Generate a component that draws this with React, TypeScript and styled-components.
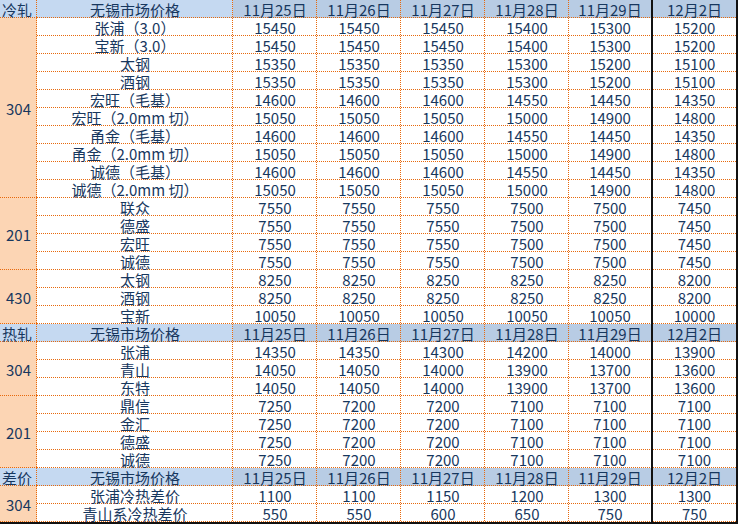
import React from "react";
import styled, { createGlobalStyle, css } from "styled-components";

const Global = createGlobalStyle`
  html, body { margin: 0; padding: 0; background: #ffffff; }
  body { font-family: "Noto Sans CJK SC", "Liberation Sans", sans-serif; }
`;

const ORANGE = "#e8690c";
const INK = "#17375e";

const Sheet = styled.div`
  display: grid;
  grid-template-columns: 37px 196px 84px 84px 84px 84px 84px 83px;
  grid-auto-rows: 18px;
  width: 738px;
  border-right: 2px solid #111;
  border-bottom: 2px solid #111;
  box-sizing: border-box;
  color: ${INK};
  font-size: 15px;
`;

type Tone = "head" | "headDate" | "cat" | "plain";

const fills: Record<Tone, string> = {
  head: "#c5d9f1",
  headDate: "#b8cce4",
  cat: "#fcd5b4",
  plain: "#ffffff",
};

const dotH = `repeating-linear-gradient(to right, ${ORANGE} 0 1px, transparent 1px 2px)`;
const dotV = `repeating-linear-gradient(to bottom, ${ORANGE} 0 1px, transparent 1px 2px)`;

const Cell = styled.div<{ $tone: Tone; $span?: number; $thick?: boolean; $left?: boolean; $last?: boolean }>`
  box-sizing: border-box;
  display: flex;
  align-items: center;
  justify-content: ${(p) => (p.$left ? "flex-start" : "center")};
  padding-left: ${(p) => (p.$left ? "2px" : "0")};
  padding-top: 1px;
  white-space: pre;
  line-height: 16px;
  background-color: ${(p) => fills[p.$tone]};
  background-repeat: no-repeat;
  ${(p) =>
    p.$thick || p.$last
      ? css`
          background-image: ${dotH};
          background-size: 100% 1px;
          background-position: left bottom;
        `
      : css`
          background-image: ${dotH}, ${dotV};
          background-size: 100% 1px, 1px 100%;
          background-position: left bottom, right top;
        `}
  ${(p) => p.$thick && css`border-right: 2px solid #111;`}
  ${(p) => p.$span && css`grid-row: span ${p.$span};`}
`;

const DATES = ["11月25日", "11月26日", "11月27日", "11月28日", "11月29日", "12月2日"];

type Row = [string, ...number[]];
type Group = { grade: string; rows: Row[] };
type Section = { title: string; groups: Group[] };

const r = (name: string, ...v: number[]): Row => [name, ...v];

const SECTIONS: Section[] = [
  {
    title: "冷轧",
    groups: [
      {
        grade: "304",
        rows: [
          r("张浦（3.0）", 15450, 15450, 15450, 15400, 15300, 15200),
          r("宝新（3.0）", 15450, 15450, 15450, 15400, 15300, 15200),
          r("太钢", 15350, 15350, 15350, 15300, 15200, 15100),
          r("酒钢", 15350, 15350, 15350, 15300, 15200, 15100),
          r("宏旺（毛基）", 14600, 14600, 14600, 14550, 14450, 14350),
          r("宏旺（2.0mm 切）", 15050, 15050, 15050, 15000, 14900, 14800),
          r("甬金（毛基）", 14600, 14600, 14600, 14550, 14450, 14350),
          r("甬金（2.0mm 切）", 15050, 15050, 15050, 15000, 14900, 14800),
          r("诚德（毛基）", 14600, 14600, 14600, 14550, 14450, 14350),
          r("诚德（2.0mm 切）", 15050, 15050, 15050, 15000, 14900, 14800),
        ],
      },
      {
        grade: "201",
        rows: [
          r("联众", 7550, 7550, 7550, 7500, 7500, 7450),
          r("德盛", 7550, 7550, 7550, 7500, 7500, 7450),
          r("宏旺", 7550, 7550, 7550, 7500, 7500, 7450),
          r("诚德", 7550, 7550, 7550, 7500, 7500, 7450),
        ],
      },
      {
        grade: "430",
        rows: [
          r("太钢", 8250, 8250, 8250, 8250, 8250, 8200),
          r("酒钢", 8250, 8250, 8250, 8250, 8250, 8200),
          r("宝新", 10050, 10050, 10050, 10050, 10050, 10000),
        ],
      },
    ],
  },
  {
    title: "热轧",
    groups: [
      {
        grade: "304",
        rows: [
          r("张浦", 14350, 14350, 14300, 14200, 14000, 13900),
          r("青山", 14050, 14050, 14000, 13900, 13700, 13600),
          r("东特", 14050, 14050, 14000, 13900, 13700, 13600),
        ],
      },
      {
        grade: "201",
        rows: [
          r("鼎信", 7250, 7200, 7200, 7100, 7100, 7100),
          r("金汇", 7250, 7200, 7200, 7100, 7100, 7100),
          r("德盛", 7250, 7200, 7200, 7100, 7100, 7100),
          r("诚德", 7250, 7200, 7200, 7100, 7100, 7100),
        ],
      },
    ],
  },
  {
    title: "差价",
    groups: [
      {
        grade: "304",
        rows: [
          r("张浦冷热差价", 1100, 1100, 1150, 1200, 1300, 1300),
          r("青山系冷热差价", 550, 550, 600, 650, 750, 750),
        ],
      },
    ],
  },
];

function HeaderRow({ title }: { title: string }) {
  return (
    <>
      <Cell $tone="head" $left>{title}</Cell>
      <Cell $tone="head">无锡市场价格</Cell>
      {DATES.map((d, i) => (
        <Cell key={d} $tone="headDate" $thick={i === 4} $last={i === 5}>
          {d}
        </Cell>
      ))}
    </>
  );
}

export default function App() {
  return (
    <>
      <Global />
      <Sheet>
        {SECTIONS.map((s) => (
          <React.Fragment key={s.title}>
            <HeaderRow title={s.title} />
            {s.groups.map((g) => (
              <React.Fragment key={g.grade}>
                {g.rows.map(([name, ...vals], ri) => (
                  <React.Fragment key={name + ri}>
                    {ri === 0 && (
                      <Cell $tone="cat" $span={g.rows.length}>
                        {g.grade}
                      </Cell>
                    )}
                    <Cell $tone="plain">{name}</Cell>
                    {vals.map((v, vi) => (
                      <Cell key={vi} $tone="plain" $thick={vi === 4} $last={vi === 5}>
                        {v}
                      </Cell>
                    ))}
                  </React.Fragment>
                ))}
              </React.Fragment>
            ))}
          </React.Fragment>
        ))}
      </Sheet>
    </>
  );
}
